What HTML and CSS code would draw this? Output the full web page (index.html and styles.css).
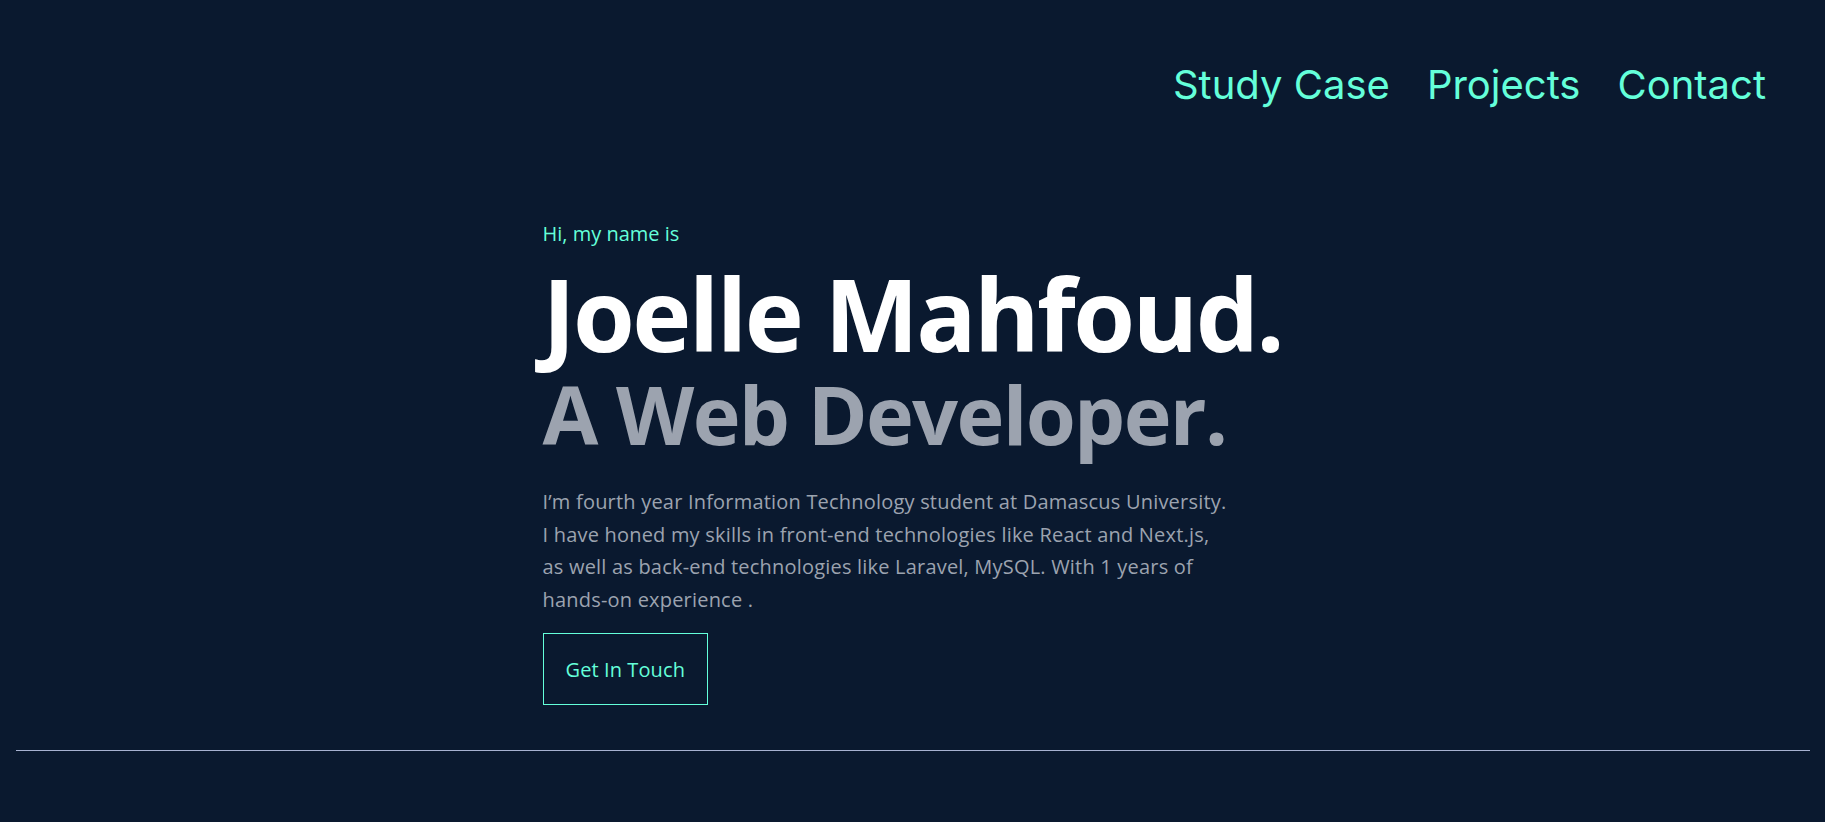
FILE: index.html
```html
<!DOCTYPE html>
<html lang="en">
<head>
<meta charset="utf-8">
<title>Joelle Mahfoud</title>
<link rel="stylesheet" href="styles.css">
</head>
<body>
<header class="nav">
  <a class="nav-link" href="#">Study Case</a>
  <a class="nav-link" href="#">Projects</a>
  <a class="nav-link" href="#">Contact</a>
</header>
<main class="hero">
  <div class="hero-inner">
    <p class="intro">Hi, my name is</p>
    <h1 class="name">Joelle Mahfoud.</h1>
    <h2 class="role">A Web Developer.</h2>
    <p class="about">I’m fourth year Information Technology student at Damascus University.<br>I have honed my skills in front-end technologies like React and Next.js,<br>as well as back-end technologies like Laravel, MySQL. With 1 years of<br>hands-on experience .</p>
    <a class="cta" href="#">Get In Touch</a>
  </div>
</main>
<div class="divider"></div>
</body>
</html>
```
FILE: styles.css
```css
html, body {
  margin: 0;
  padding: 0;
}
body {
  background: #0a192f;
  font-family: "Open Sans", "Noto Sans", sans-serif;
  height: 822px;
  overflow: hidden;
}
.nav {
  display: flex;
  justify-content: flex-end;
  gap: 37px;
  padding: 65px 59px 0 0;
}
.nav-link {
  font-family: Inter, "Noto Sans", sans-serif;
  font-size: 40px;
  line-height: 40px;
  font-weight: 400;
  color: #64ffda;
  text-decoration: none;
}
.hero {
  display: flex;
  justify-content: center;
}
.hero-inner {
  width: 740px;
  display: flex;
  flex-direction: column;
  align-items: flex-start;
}
.intro {
  margin: 115px 0 0;
  font-size: 20px;
  line-height: 28px;
  color: #64ffda;
}
.name {
  margin: 10px 0 0;
  font-size: 100px;
  line-height: 110px;
  font-weight: 700;
  letter-spacing: -2.6px;
  white-space: nowrap;
  color: #ffffff;
}
.role {
  margin: 5px 0 0;
  font-size: 81px;
  line-height: 81px;
  font-weight: 700;
  letter-spacing: -1.7px;
  white-space: nowrap;
  color: #9ca3af;
}
.about {
  margin: 32px 0 0;
  font-size: 20px;
  line-height: 32.5px;
  letter-spacing: 0.2px;
  white-space: nowrap;
  color: #9ca3af;
}
.cta {
  margin-top: 17px;
  padding: 22px 22px 20px;
  border: 1px solid #64ffda;
  font-size: 20px;
  line-height: 28px;
  letter-spacing: 0.1px;
  color: #64ffda;
  text-decoration: none;
}
.divider {
  margin: 45px 15px 0 16px;
  border-top: 1px solid #a8b2d1;
}
```
